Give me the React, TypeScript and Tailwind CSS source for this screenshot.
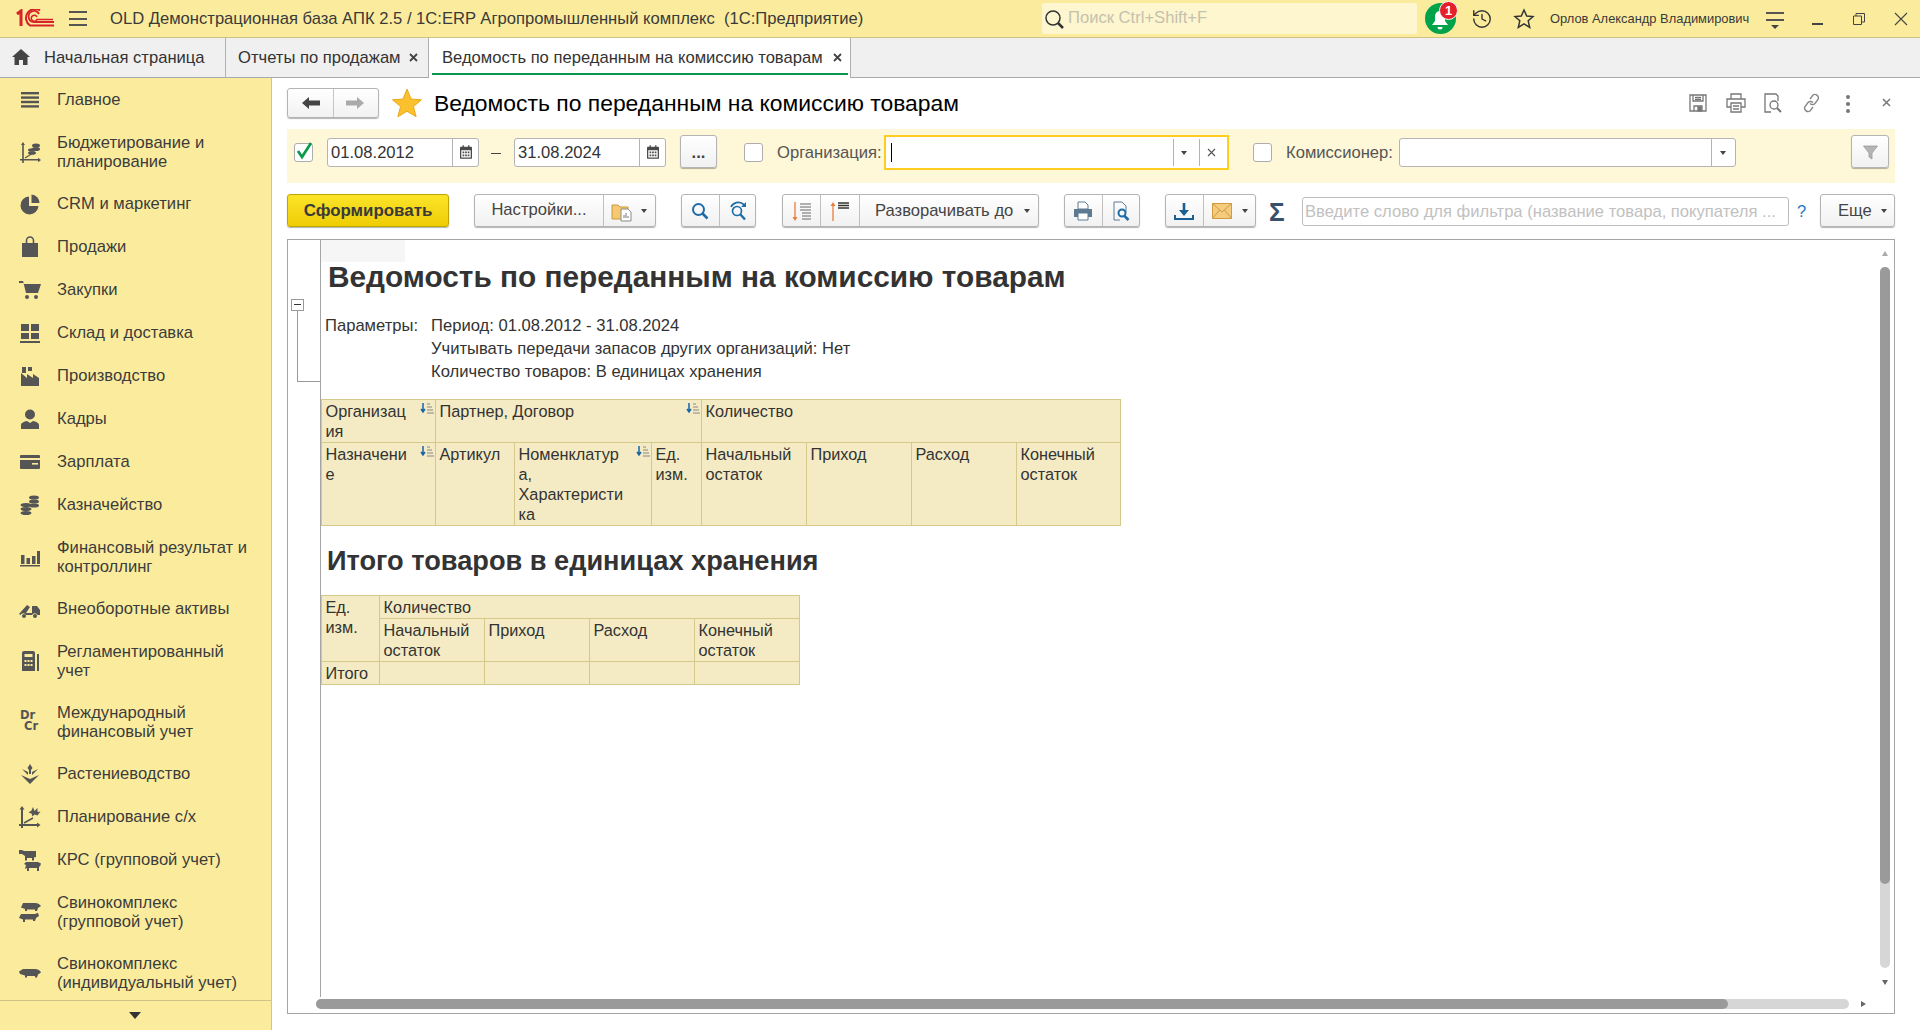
import type { ReactNode } from 'react';
import { History } from 'lucide-react';

const G = '#555555';

function Side({ children }: { children: ReactNode }) {
  return <svg width="24" height="24" viewBox="0 0 24 24" fill={G} stroke="none">{children}</svg>;
}

const sideItems: { icon: ReactNode; text: ReactNode; two?: boolean }[] = [
  { text: 'Главное', icon: <Side><rect x="3" y="4" width="18" height="2.4" /><rect x="3" y="8.4" width="18" height="2.4" /><rect x="3" y="12.8" width="18" height="2.4" /><rect x="3" y="17.2" width="18" height="2.4" /></Side> },
  { text: <>Бюджетирование и<br />планирование</>, two: true, icon: <Side><path d="M5 2l2 3H5.800v14H20v-1.200l3 2.200-3 2.200V20.500H5.800V23H4.200v-2.500H2V19h2.200V5H3z" /><path d="M7 18l8-5" stroke={G} strokeWidth="1.2" /><ellipse cx="18" cy="5.500" rx="4" ry="2" /><ellipse cx="18" cy="9" rx="4" ry="2" /><ellipse cx="14" cy="10" rx="4" ry="1.800" /><ellipse cx="14" cy="13" rx="4" ry="1.800" /></Side> },
  { text: 'CRM и маркетинг', icon: <Side><path d="M11 4.500A9 9 0 1 0 20.500 14H11z" /><path d="M13.500 2.500a8.500 8.500 0 0 1 8 8.500h-8z" /></Side> },
  { text: 'Продажи', icon: <Side><path d="M4 8h16v14H4z" /><path d="M8.500 9V5.500a3.500 3.500 0 0 1 7 0V9" fill="none" stroke={G} strokeWidth="1.600" /></Side> },
  { text: 'Закупки', icon: <Side><path d="M1 3h4l1 3h17l-3 9H8L5.500 5H1z" /><circle cx="9" cy="19" r="2" /><circle cx="18" cy="19" r="2" /></Side> },
  { text: 'Склад и доставка', icon: <Side><path d="M3 3h8v7H3zM13 3h8v7h-8zM3 12h8v6H3zM13 12h8v6h-8zM2 20h20v2H2z" /></Side> },
  { text: 'Производство', icon: <Side><path d="M3 22V9l6 5 0-4 6 4 0-4 6 4v8zM4 3h4v6H4zM10 3h4v4h-4z" /></Side> },
  { text: 'Кадры', icon: <Side><circle cx="12" cy="7.500" r="5" /><path d="M3 22v-4c0-2 3-3.500 6-4l3 2 3-2c3 .5 6 2 6 4v4z" /></Side> },
  { text: 'Зарплата', icon: <Side><path d="M3 5h18a1 1 0 0 1 1 1v2H2V6a1 1 0 0 1 1-1zM2 10h20v8a1 1 0 0 1-1 1H3a1 1 0 0 1-1-1z" /><rect x="14" y="13" width="6" height="1.600" fill="#fbec9d" /></Side> },
  { text: 'Казначейство', icon: <Side><ellipse cx="16" cy="4.500" rx="5" ry="2" /><ellipse cx="16" cy="8.500" rx="5" ry="2" /><ellipse cx="16" cy="12.500" rx="5" ry="2" /><ellipse cx="8" cy="12" rx="5.500" ry="2" /><ellipse cx="8" cy="16" rx="5.500" ry="2" /><ellipse cx="8" cy="20" rx="5.500" ry="2" /></Side> },
  { text: <>Финансовый результат и<br />контроллинг</>, two: true, icon: <Side><path d="M3 10h3.500v9H3zM8.500 13H12v6H8.500zM14 11h3.500v8H14zM19 6h3v13h-3zM2 20h20v1.500H2z" /></Side> },
  { text: 'Внеоборотные активы', icon: <Side><path d="M1 17l8-9 3 2-4 6h6V9h5l3 4v5h-2.500a3 3 0 0 0-5.500 0h-6a3 3 0 0 0-5.500 0z" /><circle cx="6" cy="19" r="2" /><circle cx="17" cy="19" r="2" /></Side> },
  { text: <>Регламентированный<br />учет</>, two: true, icon: <Side><path d="M4 4a2 2 0 0 1 2-2h9a2 2 0 0 1 2 2v18H4zM19 5h2v17h-2z" /><rect x="6.500" y="5" width="8" height="3" fill="#fbec9d" /><path d="M6.500 11h2v2h-2zM9.500 11h2v2h-2zM12.500 11h2v2h-2zM6.500 15h2v2h-2zM9.500 15h2v2h-2zM12.500 15h2v2h-2z" fill="#fbec9d" /></Side> },
  { text: <>Международный<br />финансовый учет</>, two: true, icon: <span className="w-[24px] h-[24px] pl-[2px] text-[#555] font-bold text-[11.5px] leading-[11.5px] whitespace-pre [font-family:DejaVu_Sans,sans-serif]">Dr<br />{'\u00a0Cr'}</span> },
  { text: 'Растениеводство', icon: <Side><path d="M12 2l2.500 4-1.500 2v4h-2V8L9.500 6zM4 7l6 3v3zM20 7l-6 3v3zM3 13l9 4 9-4-9 9z" /></Side> },
  { text: 'Планирование с/х', icon: <Side><path d="M4 1l2.500 3.500H5V19h14v-1.500l3.500 2.500-3.500 2.500V21H5v2H3v-2H1v-2h2V4.500H1.500z" /><path d="M6 18l9-5" stroke={G} strokeWidth="1.500" /><path d="M15 2l1.500 4 3-3 0 4 3-.5-3 4-3-1-2 2-1-3-3-1 3-2z" /></Side> },
  { text: 'КРС (групповой учет)', icon: <Side><path d="M1 2h3l2 1h12v6l-2 .5v3h-2V10H9v2.500H7V8L4 6H1zM8 14h12l3 1.500-1 3h-1V23h-2v-3h-8v3H9v-3l-2 1 1-4-2-1z" /></Side> },
  { text: <>Свинокомплекс<br />(групповой учет)</>, two: true, icon: <Side><path d="M5 3h12c3 0 5 1.500 6 3l-3 2-1 3h-2V9.500H9V11H7V9L3 7.500zM3 14h13c2 0 3-1.500 4-1l1 3-3 2-1 3h-2v-1.500H7V22H5v-2.500L1 18z" /></Side> },
  { text: <>Свинокомплекс<br />(индивидуальный учет)</>, two: true, icon: <Side><path d="M5 8h12c3 0 5 1.500 6 3.500l-3 2-1 3h-2V15H9v1.500H7v-2L2 13l-1-2.500z" /></Side> },
];

function Btn({ cls, children }: { cls: string; children?: ReactNode }) {
  return (
    <div className={`absolute flex rounded-[3px] border border-[#b4b4b4] bg-linear-to-b from-white to-[#f1f1f1] shadow-[0_1px_1px_rgba(0,0,0,0.3)] ${cls}`}>
      {children}
    </div>
  );
}

function Caret({ cls }: { cls: string }) {
  return <span className={`absolute w-0 h-0 border-l-[3.5px] border-r-[3.5px] border-t-[4px] border-l-transparent border-r-transparent border-t-[#444] ${cls}`} />;
}

function Check({ cls }: { cls: string }) {
  return <div className={`absolute w-[19px] h-[19px] rounded-[3px] border border-[#adadad] bg-white ${cls}`} />;
}

function Cal({ cls }: { cls: string }) {
  return (
    <svg className={`absolute ${cls}`} width="12" height="14" viewBox="0 0 14 16" fill="#4a4a4a">
      <path d="M1 2h2V0h1.500v2h5V0H11v2h2a1 1 0 0 1 1 1v12a1 1 0 0 1-1 1H1a1 1 0 0 1-1-1V3a1 1 0 0 1 1-1zm.5 4v8.500h11V6z" />
      <path d="M3 7.500h2v2H3zM6 7.500h2v2H6zM9 7.500h2v2H9zM3 11h2v2H3zM6 11h2v2H6zM9 11h2v2H9z" />
    </svg>
  );
}

function SortIco({ cls }: { cls: string }) {
  return (
    <svg className={`absolute ${cls}`} width="14" height="14" viewBox="0 0 14 14">
      <path d="M3 1v8M1 7l2 3 2-3" fill="none" stroke="#1466a8" strokeWidth="1.500" />
      <path d="M7 2h3M7 5h5M7 8h6M7 11h7" stroke="#888" strokeWidth="1" />
    </svg>
  );
}

const cell = 'border border-[#d4c88a] bg-[#f4ebc4] align-top px-[3.5px] pt-[1px] text-[16.3px] leading-[20px] relative';

export default function App() {
  return (
    <div className="relative w-[1920px] h-[1030px] overflow-hidden bg-white text-[16.6px] text-[#333] [font-family:Liberation_Sans,Arimo,Arial,sans-serif]">
      {/* top bar */}
      <div className="absolute left-0 top-0 w-[1920px] h-[38px] bg-[#fbec9d] border-b border-[#cfc183]">
        <svg className="absolute left-[15px] top-[9px]" width="40" height="20" viewBox="0 0 40 20" fill="none" stroke="#d8232a">
          <path d="M2 5l4-3v15" strokeWidth="3" />
          <path d="M25 1.500A9 9 0 1 0 15 16.500 H39" strokeWidth="2" />
          <path d="M24 5a5.500 5.500 0 1 0 -5 8 H39" strokeWidth="1.800" />
          <path d="M22 8a3 3 0 1 0 0 2.500h16" strokeWidth="1.600" />
        </svg>
        <div className="absolute left-[69px] top-[11px] w-[18px] h-[15px] flex flex-col justify-between">
          <div className="h-[2px] bg-[#555]" /><div className="h-[2px] bg-[#555]" /><div className="h-[2px] bg-[#555]" />
        </div>
        <div className="absolute left-[110px] top-[9px] leading-[19px] whitespace-pre text-[#3a3a3a]">OLD Демонстрационная база АПК 2.5 / 1С:ERP Агропромышленный комплекс  (1С:Предприятие)</div>
        <div className="absolute left-[1042px] top-[3px] w-[375px] h-[31px] bg-[#fdf6cf] rounded-[2px]">
          <svg className="absolute left-[2px] top-[6px]" width="21" height="21" viewBox="0 0 21 21" fill="none" stroke="#333" strokeWidth="1.500"><circle cx="9" cy="9" r="7" /><path d="M14 14l5 5" strokeWidth="2.500" /></svg>
          <span className="absolute left-[26px] top-[5px] leading-[19px] text-[#c4c1ad]">Поиск Ctrl+Shift+F</span>
        </div>
        <div className="absolute left-[1425px] top-[3px] w-[31px] h-[31px] rounded-full bg-[#00a24a]" />
        <svg className="absolute left-[1429px] top-[9px]" width="22" height="22" viewBox="0 0 22 22" fill="#fff"><path d="M11 2c3.500 0 5 3 5 6v4l3 4H3l3-4V8c0-3 1.500-6 5-6z" /><path d="M8.500 18h5a2.500 2.500 0 0 1-5 0z" /></svg>
        <div className="absolute left-[1439px] top-[1px] w-[19px] h-[19px] rounded-full bg-[#e5202b] border border-[#f5f5f5] flex items-center justify-center text-white font-bold text-[13px] leading-none">1</div>
        <History className="absolute left-[1471px] top-[8px]" size={22} color="#333" strokeWidth={1.5} />
        <svg className="absolute left-[1513px] top-[8px]" width="22" height="22" viewBox="0 0 22 22" fill="none" stroke="#333" strokeWidth="1.500"><path d="M11 2l2.700 6 6.300.6-4.800 4.200 1.500 6.500-5.700-3.500-5.700 3.500 1.500-6.500L2 8.600 8.300 8z" /></svg>
        <div className="absolute left-[1550px] top-[10px] text-[12.9px] leading-[18px] whitespace-nowrap text-[#3a3a3a]">Орлов Александр Владимирович</div>
        <div className="absolute left-[1766px] top-[12px] w-[18px]">
          <div className="h-[2px] bg-[#555]" /><div className="h-[2px] bg-[#555] mt-[5px]" />
          <Caret cls="left-[5px] top-[13px] !border-l-[4px] !border-r-[4px]" />
        </div>
        <div className="absolute left-[1812px] top-[23px] w-[11px] h-[1.500px] bg-[#444]" />
        <svg className="absolute left-[1853px] top-[13px]" width="12" height="12" viewBox="0 0 12 12" fill="none" stroke="#444"><path d="M.5 3h8v8.500h-8zM3 3V.5h8.500v8.500H8.500" /></svg>
        <svg className="absolute left-[1894px] top-[12px]" width="14" height="14" viewBox="0 0 14 14" fill="none" stroke="#444" strokeWidth="1.100"><path d="M1 1l12 12M13 1L1 13" /></svg>
      </div>

      {/* tabs */}
      <div className="absolute left-0 top-[38px] w-[1920px] h-[40px] bg-[#f0f0f0] border-b border-[#a9a9a9] flex">
        <div className="relative w-[226px] h-[39px] border-r border-[#b0b0b0]">
          <svg className="absolute left-[12px] top-[11px]" width="18" height="16" viewBox="0 0 18 16" fill="#444"><path d="M9 0l9 8h-2.500v8H11v-5H7v5H2.500V8H0z" /></svg>
          <span className="absolute left-[44px] top-[10px] leading-[19px] whitespace-nowrap">Начальная страница</span>
        </div>
        <div className="relative w-[203px] h-[39px] border-r border-[#b0b0b0]">
          <span className="absolute left-[12px] top-[10px] leading-[19px] whitespace-nowrap">Отчеты по продажам</span>
          <svg className="absolute left-[183px] top-[15px]" width="9" height="9" viewBox="0 0 9 9" stroke="#444" strokeWidth="1.800"><path d="M1 1l7 7M8 1L1 8" /></svg>
        </div>
        <div className="relative w-[422px] h-[40px] bg-white border-r border-[#b0b0b0]">
          <span className="absolute left-[13px] top-[10px] leading-[19px] whitespace-nowrap">Ведомость по переданным на комиссию товарам</span>
          <svg className="absolute left-[404px] top-[15px]" width="9" height="9" viewBox="0 0 9 9" stroke="#444" strokeWidth="1.800"><path d="M1 1l7 7M8 1L1 8" /></svg>
          <div className="absolute left-[3px] top-[35px] w-[416px] h-[2px] bg-[#0a9650]" />
        </div>
      </div>

      {/* sidebar */}
      <div className="absolute left-0 top-[78px] w-[272px] h-[952px] bg-[#fbec9d] border-r border-[#d2c68b] overflow-hidden">
        {sideItems.map((it, i) => (
          <div key={i} className={`flex items-center pl-[18px] ${it.two ? 'h-[61px]' : 'h-[43px]'}`}>
            <div className="w-[24px] h-[24px] flex items-center justify-center shrink-0">{it.icon}</div>
            <div className="ml-[15px] pt-[2px] leading-[18.500px] text-[#3c3c3c] whitespace-nowrap">{it.text}</div>
          </div>
        ))}
        <div className="absolute left-0 top-[922px] w-[271px] h-[30px] bg-[#fbec9d] border-t border-[#cfc388]">
          <span className="absolute left-[129px] top-[11px] w-0 h-0 border-l-[6px] border-r-[6px] border-t-[7px] border-l-transparent border-r-transparent border-t-[#333]" />
        </div>
      </div>

      {/* header */}
      <Btn cls="left-[287px] top-[88px] w-[92px] h-[30px]">
        <div className="relative w-[46px] border-r border-[#c6c6c6]">
          <svg className="absolute left-[14px] top-[8px]" width="18" height="12" viewBox="0 0 18 12" fill="#444"><path d="M0 6l7-6v3.500h11v5H7V12z" /></svg>
        </div>
        <div className="relative flex-1">
          <svg className="absolute left-[12px] top-[8px]" width="18" height="12" viewBox="0 0 18 12" fill="#aaa"><path d="M18 6l-7-6v3.500H0v5h11V12z" /></svg>
        </div>
      </Btn>
      <svg className="absolute left-[392px] top-[88px]" width="30" height="30" viewBox="0 0 30 30" fill="#fbc02d" stroke="#eaa91b" strokeWidth="1"><path d="M15 1l4 10 10.500.8-8 6.700 2.600 10.300L15 23.200 5.900 28.800l2.600-10.300-8-6.700L11 11z" /></svg>
      <div className="absolute left-[434px] top-[90px] text-[22.9px] leading-[26px] text-black whitespace-nowrap">Ведомость по переданным на комиссию товарам</div>

      <svg className="absolute left-[1689px] top-[94px]" width="18" height="18" viewBox="0 0 18 18" fill="none" stroke="#777" strokeWidth="1.300"><path d="M1 1h16v16H1z" /><path d="M4 1v6h10V1M5 17v-5h8v5" /><path d="M6 3.500h6M6 5.500h6" /><rect x="9" y="13" width="3" height="4" fill="#777" /></svg>
      <svg className="absolute left-[1726px] top-[93px]" width="20" height="20" viewBox="0 0 20 20" fill="none" stroke="#777" strokeWidth="1.300"><path d="M5 6V1h10v5M5 14H1V6h18v8h-4" /><path d="M5 10h10v9H5zM7 13h6M7 16h6" /></svg>
      <svg className="absolute left-[1764px] top-[93px]" width="19" height="20" viewBox="0 0 19 20" fill="none" stroke="#777" strokeWidth="1.300"><path d="M7 19H1V1h11l2 2v5" /><circle cx="10" cy="12" r="4" /><path d="M13 15l4 4" strokeWidth="2" /></svg>
      <svg className="absolute left-[1802px] top-[93px]" width="19" height="20" viewBox="0 0 19 20" fill="none" stroke="#888" strokeWidth="1.400"><path d="M8 6l3-4a3.500 3.500 0 0 1 5 4.500l-3 4a3.500 3.500 0 0 1-5 0" /><path d="M11 14l-3 4a3.500 3.500 0 0 1-5-4.500l3-4a3.500 3.500 0 0 1 5 0" /></svg>
      <div className="absolute left-[1846px] top-[95px] w-[4px] flex flex-col gap-[3px]">
        <div className="h-[4px] rounded-full bg-[#777]" /><div className="h-[4px] rounded-full bg-[#777]" /><div className="h-[4px] rounded-full bg-[#777]" />
      </div>
      <svg className="absolute left-[1882px] top-[98px]" width="9" height="9" viewBox="0 0 9 9" stroke="#777" strokeWidth="1.500"><path d="M1 1l7 7M8 1L1 8" /></svg>

      {/* filter bar */}
      <div className="absolute left-[287px] top-[129px] w-[1608px] h-[54px] bg-[#fef8d8]" />
      <Check cls="left-[294px] top-[143px]" />
      <svg className="absolute left-[295px] top-[141px]" width="20" height="19" viewBox="0 0 20 19" fill="none" stroke="#0a9a4a" strokeWidth="2.800"><path d="M3 10l4 6 9-14" /></svg>

      <div className="absolute left-[327px] top-[138px] w-[152px] h-[29px] bg-white border border-[#b4b4b4] rounded-[3px]">
        <span className="absolute left-[3px] top-[4px] leading-[19px]">01.08.2012</span>
        <div className="absolute left-[124px] top-0 h-full border-l border-[#b4b4b4]" />
        <Cal cls="left-[132px] top-[6px]" />
      </div>
      <div className="absolute left-[491px] top-[153px] w-[10px] h-[1px] bg-[#444]" />
      <div className="absolute left-[514px] top-[138px] w-[152px] h-[29px] bg-white border border-[#b4b4b4] rounded-[3px]">
        <span className="absolute left-[3px] top-[4px] leading-[19px]">31.08.2024</span>
        <div className="absolute left-[124px] top-0 h-full border-l border-[#b4b4b4]" />
        <Cal cls="left-[132px] top-[6px]" />
      </div>
      <Btn cls="left-[680px] top-[135px] w-[37px] h-[33px] items-center justify-center font-bold text-[#444] pt-[3px]">...</Btn>
      <Check cls="left-[744px] top-[143px]" />
      <div className="absolute left-[777px] top-[143px] leading-[19px] whitespace-nowrap text-[#555]">Организация:</div>
      <div className="absolute left-[884px] top-[135px] w-[345px] h-[35px] bg-white border-2 border-[#ffcd1f]">
        <div className="absolute left-[5px] top-[6px] w-[1px] h-[19px] bg-black" />
        <div className="absolute left-[287px] top-[2px] h-[27px] border-l border-[#b4b4b4]" />
        <Caret cls="left-[295px] top-[14px]" />
        <div className="absolute left-[313px] top-[2px] h-[27px] border-l border-[#b4b4b4]" />
        <svg className="absolute left-[321px] top-[11px]" width="9" height="9" viewBox="0 0 9 9" stroke="#555" strokeWidth="1.100"><path d="M1 1l7 7M8 1L1 8" /></svg>
      </div>
      <Check cls="left-[1253px] top-[143px]" />
      <div className="absolute left-[1286px] top-[143px] leading-[19px] whitespace-nowrap text-[#555]">Комиссионер:</div>
      <div className="absolute left-[1399px] top-[138px] w-[337px] h-[29px] bg-white border border-[#b4b4b4] rounded-[3px]">
        <div className="absolute left-[311px] top-0 h-full border-l border-[#b4b4b4]" />
        <Caret cls="left-[320px] top-[12px]" />
      </div>
      <Btn cls="left-[1851px] top-[135px] w-[38px] h-[33px]">
        <svg className="absolute left-[11px] top-[9px]" width="15" height="15" viewBox="0 0 15 15" fill="#b5b5b5" stroke="#999" strokeWidth="0.800"><path d="M.5 1h14L9 8v6l-3-2V8z" /></svg>
      </Btn>

      {/* toolbar */}
      <div className="absolute left-[287px] top-[194px] w-[162px] h-[33px] rounded-[3px] border border-[#c0a400] bg-linear-to-b from-[#fbe427] to-[#efcd00] shadow-[0_1px_1px_rgba(0,0,0,0.3)] flex items-center justify-center font-bold text-[16.9px] text-[#3a3a3a]">Сформировать</div>

      <Btn cls="left-[474px] top-[194px] w-[182px] h-[33px]">
        <div className="w-[129px] border-r border-[#c0c0c0] flex items-center justify-center text-[#444]">Настройки...</div>
        <svg className="absolute left-[136px] top-[7px]" width="22" height="20" viewBox="0 0 22 20"><path d="M1 17V3h6l2 2h8v12z" fill="#f7c873" stroke="#c79a3c" /><path d="M10 7h7l3 3v9H10z" fill="#fff" stroke="#8a8a8a" /><path d="M13 16v-3M15 16v-5M17 16v-2" stroke="#777" /></svg>
        <Caret cls="left-[166px] top-[14px]" />
      </Btn>

      <Btn cls="left-[681px] top-[194px] w-[75px] h-[33px]">
        <div className="relative w-[38px] border-r border-[#c0c0c0]">
          <svg className="absolute left-[9px] top-[7px]" width="18" height="18" viewBox="0 0 18 18" fill="none" stroke="#1f6da8" strokeWidth="2"><circle cx="7.500" cy="7.500" r="5.500" /><path d="M11.500 11.500l5 5" strokeWidth="2.600" /></svg>
        </div>
        <div className="relative flex-1">
          <svg className="absolute left-[8px] top-[6px]" width="20" height="20" viewBox="0 0 20 20" fill="none" stroke="#1f6da8" strokeWidth="1.700"><circle cx="9" cy="10" r="4.500" /><path d="M12.500 13.500l4.500 5" strokeWidth="2.400" /><path d="M3 6a8 8 0 0 1 12-3l2 2" /><path d="M18 1v5h-5" fill="#1f6da8" stroke="none" /></svg>
        </div>
      </Btn>

      <Btn cls="left-[782px] top-[194px] w-[257px] h-[33px]">
        <div className="relative w-[38px] border-r border-[#c0c0c0]">
          <svg className="absolute left-[9px] top-[7px]" width="21" height="20" viewBox="0 0 21 20" fill="none"><path d="M3 0v16" stroke="#e87d3c" strokeWidth="1.300" /><path d="M.5 15h5L3 19z" fill="#e87d3c" /><path d="M8 2h11M8 5h11M8 8h11M10 11h9M10 14h9M10 17h9" stroke="#666" strokeWidth="1" /></svg>
        </div>
        <div className="relative w-[39px] border-r border-[#c0c0c0]">
          <svg className="absolute left-[9px] top-[7px]" width="21" height="20" viewBox="0 0 21 20" fill="none"><path d="M3 3v16" stroke="#e87d3c" strokeWidth="1.300" /><path d="M.5 4h5L3 0z" fill="#e87d3c" /><path d="M8 1h11M8 3.500h11M8 6h11" stroke="#333" strokeWidth="1.300" /></svg>
        </div>
        <div className="flex-1 pl-[15px] leading-[31px] whitespace-nowrap text-[#444]">Разворачивать до</div>
        <Caret cls="left-[241px] top-[14px]" />
      </Btn>

      <Btn cls="left-[1064px] top-[194px] w-[76px] h-[33px]">
        <div className="relative w-[38px] border-r border-[#c0c0c0]">
          <svg className="absolute left-[8px] top-[6px]" width="20" height="20" viewBox="0 0 20 20"><path d="M5 8V1h7l3 3v4z" fill="#fff" stroke="#5d7a92" /><path d="M1 8h18v8H1z" fill="#5d7a92" /><path d="M5 12h10v7H5z" fill="#fff" stroke="#5d7a92" /></svg>
        </div>
        <div className="relative flex-1">
          <svg className="absolute left-[9px] top-[6px]" width="20" height="21" viewBox="0 0 20 21" fill="none"><path d="M8 19H2V1h8l4 4v6" stroke="#5d7a92" /><circle cx="10" cy="12" r="3.500" stroke="#1f6da8" strokeWidth="2" /><path d="M12.500 15l4 4" stroke="#1f6da8" strokeWidth="2.600" /></svg>
        </div>
      </Btn>

      <Btn cls="left-[1165px] top-[194px] w-[91px] h-[33px]">
        <div className="relative w-[38px] border-r border-[#c0c0c0]">
          <svg className="absolute left-[8px] top-[7px]" width="20" height="19" viewBox="0 0 20 19" fill="none" stroke="#1a5f93"><path d="M10 1v9" strokeWidth="2.600" /><path d="M5 8h10l-5 6z" fill="#1a5f93" stroke="none" /><path d="M1 13v4h18v-4" strokeWidth="2" /></svg>
        </div>
        <div className="relative flex-1">
          <svg className="absolute left-[8px] top-[8px]" width="20" height="16" viewBox="0 0 20 16"><path d="M.5.500h19v15H.500z" fill="#f5cb7e" stroke="#d09a3f" /><path d="M.5.500L10 9 19.500.500M.5 15.500L7.500 7M19.500 15.500L12.500 7" fill="none" stroke="#d09a3f" /></svg>
          <Caret cls="left-[38px] top-[14px]" />
        </div>
      </Btn>

      <div className="absolute left-[1269px] top-[197px] text-[26px] leading-[30px] font-bold text-[#39506a]">Σ</div>

      <div className="absolute left-[1302px] top-[197px] w-[487px] h-[29px] bg-white border border-[#bdbdbd] rounded-[3px] px-[2px] leading-[27px] whitespace-nowrap overflow-hidden text-[#c1c1c1]">Введите слово для фильтра (название товара, покупателя ...</div>
      <div className="absolute left-[1797px] top-[202px] leading-[19px] text-[#1f78c1]">?</div>
      <Btn cls="left-[1820px] top-[194px] w-[75px] h-[33px]">
        <span className="absolute left-[17px] top-[6px] leading-[19px] text-[#444]">Еще</span>
        <Caret cls="left-[60px] top-[14px]" />
      </Btn>

      {/* report */}
      <div className="absolute left-[287px] top-[239px] w-[1608px] h-[775px] border border-[#a5a5a5] bg-white" />
      <div className="absolute left-[320px] top-[240px] w-[1px] h-[757px] bg-[#a5a5a5]" />
      <div className="absolute left-[321px] top-[240px] w-[84px] h-[22px] bg-[#f6f6f6]" />
      <div className="absolute left-[291px] top-[299px] w-[13px] h-[12px] bg-white border border-[#999]">
        <div className="absolute left-[2px] top-[4px] w-[7px] h-[1px] bg-[#333]" />
      </div>
      <div className="absolute left-[297px] top-[311px] w-[24px] h-[71px] border-l border-b border-[#999]" />

      <div className="absolute left-[328px] top-[258px] text-[29.8px] leading-[38px] font-bold text-[#333] whitespace-nowrap">Ведомость по переданным на комиссию товарам</div>
      <div className="absolute left-[325px] top-[316px] leading-[19px] whitespace-nowrap">Параметры:</div>
      <div className="absolute left-[431px] top-[314px] leading-[23px] whitespace-nowrap">
        Период: 01.08.2012 - 31.08.2024<br />
        Учитывать передачи запасов других организаций: Нет<br />
        Количество товаров: В единицах хранения
      </div>

      <table className="absolute left-[321px] top-[399px] w-[799px] table-fixed border-collapse">
        <colgroup>
          <col className="w-[114px]" /><col className="w-[79px]" /><col className="w-[137px]" /><col className="w-[50px]" />
          <col className="w-[105px]" /><col className="w-[105px]" /><col className="w-[105px]" /><col className="w-[104px]" />
        </colgroup>
        <tbody>
          <tr className="h-[43px]">
            <td className={cell}>Организац<br />ия<SortIco cls="right-[1px] top-[2px]" /></td>
            <td className={cell} colSpan={3}>Партнер, Договор<SortIco cls="right-[1px] top-[2px]" /></td>
            <td className={cell} colSpan={4}>Количество</td>
          </tr>
          <tr className="h-[83px]">
            <td className={cell}>Назначени<br />е<SortIco cls="right-[1px] top-[2px]" /></td>
            <td className={cell}>Артикул</td>
            <td className={cell}>Номенклатур<br />а,<br />Характеристи<br />ка<SortIco cls="right-[1px] top-[2px]" /></td>
            <td className={cell}>Ед.<br />изм.</td>
            <td className={cell}>Начальный<br />остаток</td>
            <td className={cell}>Приход</td>
            <td className={cell}>Расход</td>
            <td className={cell}>Конечный<br />остаток</td>
          </tr>
        </tbody>
      </table>

      <div className="absolute left-[327px] top-[544px] text-[27.2px] leading-[34px] font-bold text-[#333] whitespace-nowrap">Итого товаров в единицах хранения</div>

      <table className="absolute left-[321px] top-[595px] w-[478px] table-fixed border-collapse">
        <colgroup>
          <col className="w-[58px]" /><col className="w-[105px]" /><col className="w-[105px]" /><col className="w-[105px]" /><col className="w-[105px]" />
        </colgroup>
        <tbody>
          <tr className="h-[23px]">
            <td className={cell} rowSpan={2}>Ед.<br />изм.</td>
            <td className={cell} colSpan={4}>Количество</td>
          </tr>
          <tr className="h-[43px]">
            <td className={cell}>Начальный<br />остаток</td>
            <td className={cell}>Приход</td>
            <td className={cell}>Расход</td>
            <td className={cell}>Конечный<br />остаток</td>
          </tr>
          <tr className="h-[23px]">
            <td className={cell}>Итого</td>
            <td className={cell} /><td className={cell} /><td className={cell} /><td className={cell} />
          </tr>
        </tbody>
      </table>

      {/* scrollbars */}
      <span className="absolute left-[1882px] top-[251px] w-0 h-0 border-l-[3.5px] border-r-[3.5px] border-b-[5px] border-l-transparent border-r-transparent border-b-[#aaa]" />
      <div className="absolute left-[1880px] top-[267px] w-[10px] h-[701px] rounded-full bg-[#d6d6d6]">
        <div className="w-[10px] h-[617px] rounded-full bg-[#9a9a9a]" />
      </div>
      <span className="absolute left-[1882px] top-[980px] w-0 h-0 border-l-[3.5px] border-r-[3.5px] border-t-[5px] border-l-transparent border-r-transparent border-t-[#666]" />
      <div className="absolute left-[316px] top-[999px] w-[1533px] h-[10px] rounded-full bg-[#d6d6d6]">
        <div className="h-[10px] w-[1412px] rounded-full bg-[#9a9a9a]" />
      </div>
      <span className="absolute left-[1861px] top-[1001px] w-0 h-0 border-t-[3.5px] border-b-[3.5px] border-l-[5px] border-t-transparent border-b-transparent border-l-[#666]" />
    </div>
  );
}
